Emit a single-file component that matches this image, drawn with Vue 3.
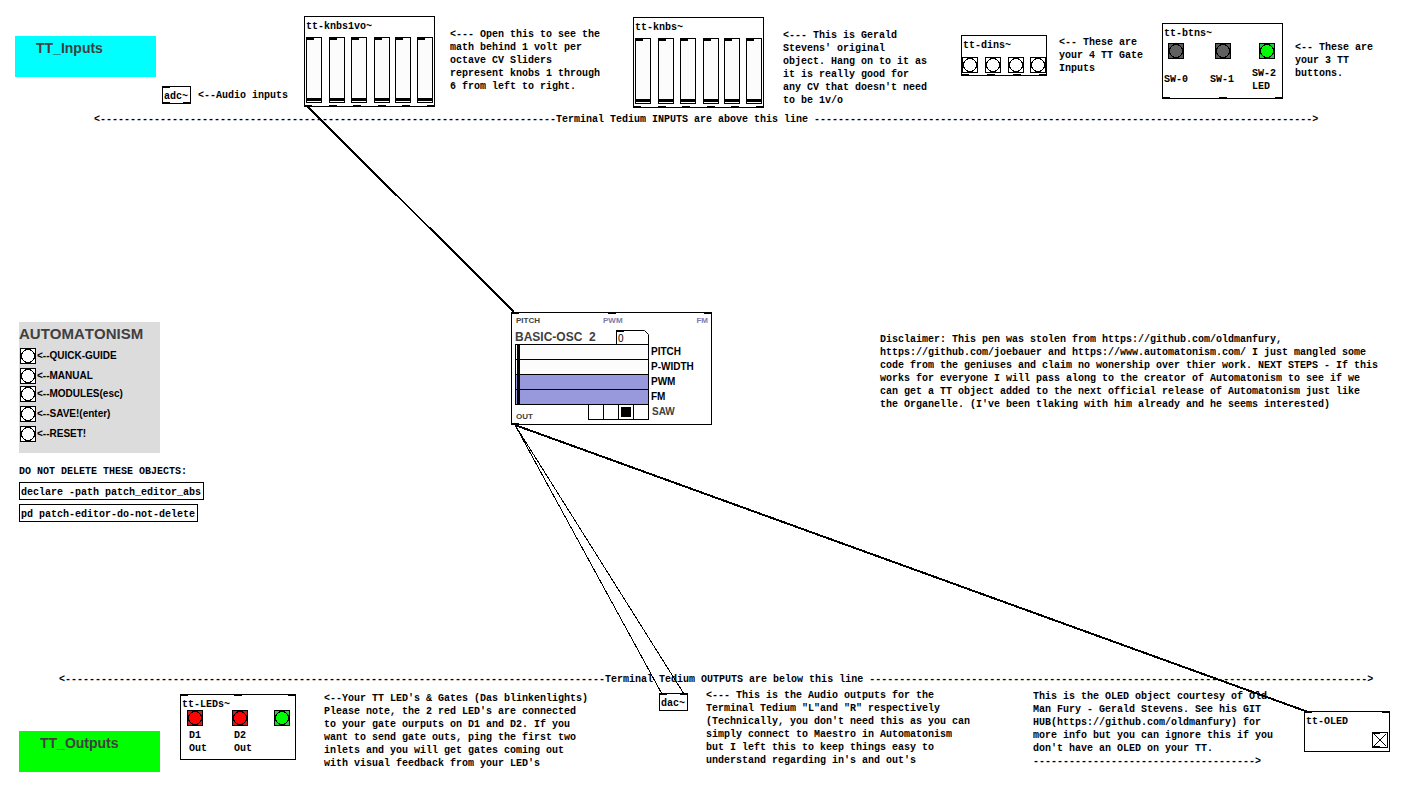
<script setup>
import { ref } from 'vue'

const at = (x, y) => ({ left: x + 'px', top: y + 'px' })
const dash = (n) => '-'.repeat(n)

const comments = [
  { x: 198, y: 89, lines: ['<--Audio inputs'] },
  {
    x: 450, y: 28,
    lines: ['<--- Open this to see the', 'math behind 1 volt per', 'octave CV Sliders', 'represent knobs 1 through', '6 from left to right.'],
  },
  {
    x: 783, y: 29,
    lines: ['<--- This is Gerald', "Stevens' original", 'object. Hang on to it as', 'it is really good for', "any CV that doesn't need", 'to be 1v/o'],
  },
  { x: 1059, y: 36, lines: ['<-- These are', 'your 4 TT Gate', 'Inputs'] },
  { x: 1295, y: 41, lines: ['<-- These are', 'your 3 TT', 'buttons.'] },
  { x: 94, y: 113, lines: ['<' + dash(76) + 'Terminal Tedium INPUTS are above this line ' + dash(83) + '>'] },
  {
    x: 880, y: 333,
    lines: [
      'Disclaimer: This pen was stolen from https://github.com/oldmanfury,',
      'https://github.com/joebauer and https://www.automatonism.com/ I just mangled some',
      'code from the geniuses and claim no wonership over thier work. NEXT STEPS - If this',
      'works for everyone I will pass along to the creator of Automatonism to see if we',
      'can get a TT object added to the next official release of Automatonism just like',
      "the Organelle. (I've been tlaking with him already and he seems interested)",
    ],
  },
  { x: 19, y: 465, lines: ['DO NOT DELETE THESE OBJECTS:'] },
  { x: 59, y: 673, lines: ['<' + dash(90) + 'Terminal Tedium OUTPUTS are below this line ' + dash(83) + '>'] },
  {
    x: 324, y: 692,
    lines: [
      "<--Your TT LED's & Gates (Das blinkenlights)",
      "Please note, the 2 red LED's are connected",
      'to your gate ourputs on D1 and D2. If you',
      'want to send gate outs, ping the first two',
      'inlets and you will get gates coming out',
      "with visual feedback from your LED's",
    ],
  },
  {
    x: 706, y: 689,
    lines: [
      '<--- This is the Audio outputs for the',
      'Terminal Tedium "L"and "R" respectively',
      "(Technically, you don't need this as you can",
      'simply connect to Maestro in Automatonism',
      'but I left this to keep things easy to',
      "understand regarding in's and out's",
    ],
  },
  {
    x: 1033, y: 690,
    lines: [
      'This is the OLED object courtesy of Old',
      'Man Fury - Gerald Stevens. See his GIT',
      'HUB(https://github.com/oldmanfury) for',
      'more info but you can ignore this if you',
      "don't have an OLED on your TT.",
      dash(37) + '>',
    ],
  },
]

const objects = [
  { x: 162, y: 86, text: 'adc~', ins: 1, outs: 2 },
  { x: 659, y: 693, text: 'dac~', ins: 2, outs: 0 },
  { x: 19, y: 482, text: 'declare -path patch_editor_abs', ins: 0, outs: 0 },
  { x: 19, y: 504, text: 'pd patch-editor-do-not-delete', ins: 0, outs: 0 },
]

const knobBanks = ref([
  { x: 304, y: 16, title: 'tt-knbs1vo~', knobs: [0, 0, 0, 0, 0, 0] },
  { x: 633, y: 17, title: 'tt-knbs~', knobs: [0, 0, 0, 0, 0, 0] },
])

const menu = ['<--QUICK-GUIDE', '<--MANUAL', '<--MODULES(esc)', '<--SAVE!(enter)', '<--RESET!']

const oscSliders = ref([
  { name: 'PITCH', value: 0, mod: false },
  { name: 'P-WIDTH', value: 0, mod: false },
  { name: 'PWM', value: 0, mod: true },
  { name: 'FM', value: 0, mod: true },
])
const wave = ref(2)
const semitone = ref('0')
const oled = ref(true)

const cords = [
  { from: [308, 107], to: [514, 312], signal: true },
  { from: [515, 425], to: [662, 694], signal: false },
  { from: [515, 425], to: [684, 694], signal: false },
  { from: [515, 425], to: [1308, 712], signal: true },
]
</script>

<template>
  <main class="patch">
    <header class="banner inputs" :style="at(15, 36)">TT_Inputs</header>
    <header class="banner outputs" :style="at(19, 731)">TT_Outputs</header>

    <p v-for="c in comments" :key="c.x + '-' + c.y" class="comment" :style="at(c.x, c.y)">{{ c.lines.join('\n') }}</p>

    <div v-for="o in objects" :key="o.text" class="node object" :style="at(o.x, o.y)">
      {{ o.text }}
      <span class="ports top"><i v-for="n in o.ins" :key="n"></i></span>
      <span class="ports bottom"><i v-for="n in o.outs" :key="n"></i></span>
    </div>

    <section v-for="b in knobBanks" :key="b.title" class="node bank" :style="at(b.x, b.y)">
      <h2 class="title">{{ b.title }}</h2>
      <div class="knobs">
        <input v-for="(k, i) in b.knobs" :key="i" v-model="b.knobs[i]" class="vslider" type="range" min="0" max="100" :aria-label="'Knob ' + (i + 1)" />
      </div>
      <span class="ports bottom"><i v-for="n in 6" :key="n"></i></span>
    </section>

    <section class="node dins" :style="at(961, 35)">
      <h2 class="title">tt-dins~</h2>
      <div class="gates">
        <button v-for="n in 4" :key="n" class="bang" type="button" :aria-label="'Gate ' + n">
          <svg viewBox="0 0 14 14"><circle cx="7" cy="7" r="6.5" /></svg>
        </button>
      </div>
      <span class="ports bottom"><i v-for="n in 4" :key="n"></i></span>
    </section>

    <section class="node btns" :style="at(1162, 23)">
      <h2 class="title">tt-btns~</h2>
      <div class="switches">
        <label class="cell">
          <button class="bang grey" type="button"><svg viewBox="0 0 14 14"><circle cx="7" cy="7" r="6.5" /></svg></button>
          <span>SW-0</span>
        </label>
        <label class="cell">
          <button class="bang grey" type="button"><svg viewBox="0 0 14 14"><circle cx="7" cy="7" r="6.5" /></svg></button>
          <span>SW-1</span>
        </label>
        <label class="cell tall">
          <button class="bang green" type="button"><svg viewBox="0 0 14 14"><circle cx="7" cy="7" r="6.5" /></svg></button>
          <span>SW-2<br />LED</span>
        </label>
      </div>
      <span class="ports bottom"><i v-for="n in 3" :key="n"></i></span>
    </section>

    <nav class="menu" :style="at(19, 322)">
      <h1>AUTOMATONISM</h1>
      <label v-for="m in menu" :key="m" class="entry">
        <button class="bang" type="button"><svg viewBox="0 0 14 14"><circle cx="7" cy="7" r="6.5" /></svg></button>
        <span>{{ m }}</span>
      </label>
    </nav>

    <section class="node osc" :style="at(511, 312)">
      <div class="inlets"><span>PITCH</span><span class="mod">PWM</span><span class="mod">FM</span></div>
      <div class="heading">
        <h2>BASIC-OSC&nbsp; 2</h2>
        <div class="numbox">
          <svg viewBox="0 0 33 15"><path d="M0.5 15V0.5H28.5L32.5 4.5V15" /><path class="port" d="M0 0H8V2H0Z" /></svg>
          <input v-model="semitone" type="text" aria-label="Semitone" />
        </div>
      </div>
      <div class="params">
        <label v-for="s in oscSliders" :key="s.name" class="param">
          <input v-model="s.value" type="range" min="0" max="100" class="hslider" :class="{ mod: s.mod }" />
          <span>{{ s.name }}</span>
        </label>
      </div>
      <div class="footer">
        <span class="out">OUT</span>
        <div class="radios">
          <input v-for="n in 4" :key="n" v-model="wave" type="radio" name="wave" :value="n - 1" :aria-label="'Waveform ' + n" />
        </div>
        <span class="shape">SAW</span>
      </div>
      <span class="ports top"><i v-for="n in 3" :key="n"></i></span>
      <span class="ports bottom"><i></i></span>
    </section>

    <section class="node leds" :style="at(180, 694)">
      <h2 class="title">tt-LEDs~</h2>
      <div class="lamps">
        <label class="cell">
          <button class="bang red" type="button"><svg viewBox="0 0 14 14"><circle cx="7" cy="7" r="6.5" /></svg></button>
          <span>D1<br />Out</span>
        </label>
        <label class="cell">
          <button class="bang red" type="button"><svg viewBox="0 0 14 14"><circle cx="7" cy="7" r="6.5" /></svg></button>
          <span>D2<br />Out</span>
        </label>
        <button class="bang green" type="button" aria-label="LED 3"><svg viewBox="0 0 14 14"><circle cx="7" cy="7" r="6.5" /></svg></button>
      </div>
      <span class="ports top"><i v-for="n in 3" :key="n"></i></span>
    </section>

    <section class="node oled" :style="at(1304, 711)">
      <h2 class="title">tt-OLED</h2>
      <label class="toggle">
        <input v-model="oled" type="checkbox" aria-label="OLED on" />
        <svg v-if="oled" viewBox="0 0 16 16"><path d="M2 2L14 14M14 2L2 14" /><path class="port" d="M0 0H8V2H0ZM0 14H8V16H0Z" /></svg>
      </label>
      <span class="ports top"><i v-for="n in 2" :key="n"></i></span>
    </section>

    <svg class="cords">
      <line v-for="(c, i) in cords" :key="i" :class="{ signal: c.signal }" :x1="c.from[0]" :y1="c.from[1]" :x2="c.to[0]" :y2="c.to[1]" />
    </svg>
  </main>
</template>

<style>
body {
  margin: 0;
  background: #fff;
}
</style>

<style scoped>
.patch {
  position: relative;
  min-height: 100vh;
  overflow: hidden;
  background: #fff;
  color: #000;
  font: bold 10px/13px "Liberation Mono", "Courier New", monospace;
}

.patch *,
.patch *::before {
  box-sizing: border-box;
}

h1,
h2,
p {
  margin: 0;
  font: inherit;
}

button,
input {
  display: block;
  margin: 0;
  padding: 0;
  border-radius: 0;
  font: inherit;
}

.comment,
.node,
.banner,
.menu {
  position: absolute;
}

.comment {
  white-space: pre;
}

.node {
  border: 1px solid #000;
  background: #fff;
}

.object {
  padding: 3px 2px 0 1px;
  white-space: nowrap;
}

.title {
  padding-left: 1px;
}

.ports {
  position: absolute;
  left: -1px;
  right: -1px;
  display: flex;
  justify-content: space-between;
}

.ports.top {
  top: -1px;
}

.ports.bottom {
  bottom: -1px;
}

.ports i {
  width: 8px;
  height: 2px;
  background: #000;
}

.banner {
  width: 141px;
  padding: 4px 0 21px 21px;
  color: #404040;
  font: bold 14px/16px "Liberation Sans", Arial, sans-serif;
}

.banner.inputs {
  background: #00ffff;
}

.banner.outputs {
  background: #00ff00;
}

.bang {
  flex: none;
  width: 16px;
  height: 16px;
  border: 1px solid #000;
  background: #fff;
}

.bang svg {
  display: block;
  width: 14px;
  height: 14px;
}

.bang circle {
  fill: #fcfcfc;
  stroke: #000;
  shape-rendering: crispEdges;
}

.bang.grey {
  background: #585858;
}

.bang.grey circle {
  fill: #606060;
}

.bang.green {
  background: #28c838;
}

.bang.green circle {
  fill: #00fc04;
}

.bang.red {
  background: #c81c1c;
}

.bang.red circle {
  fill: #fc0404;
}

.bank {
  padding: 3px 1px 3px;
}

.bank .title {
  padding-left: 0;
}

.knobs {
  display: grid;
  grid-template-columns: 23px 22px 23px 21px 22px 16px;
  margin-top: 4px;
}

.vslider {
  width: 16px;
  height: 66px;
  padding: 0 0 1px;
  border: 1px solid #000;
  background: linear-gradient(#000 0 0) 0 0 / 7px 2px no-repeat, #fcfcfc;
  appearance: none;
  writing-mode: vertical-lr;
  direction: rtl;
}

.vslider::-webkit-slider-thumb {
  width: 14px;
  height: 3px;
  border: 0;
  border-radius: 0;
  background: #000;
  appearance: none;
}

.dins {
  padding: 3px 0 2px;
}

.gates {
  display: grid;
  grid-template-columns: 23px 23px 22px 16px;
  margin-top: 5px;
}

.btns {
  padding: 3px 0 5px;
}

.switches {
  display: grid;
  grid-template-columns: 46px 42px 31px;
  margin-top: 3px;
}

.cell {
  display: block;
}

.switches .cell {
  padding-left: 1px;
}

.switches .bang {
  margin: 0 0 14px 4px;
}

.switches .cell:nth-child(2) .bang {
  margin-left: 5px;
}

.switches .tall .bang {
  margin: 0 0 8px 7px;
}

.menu {
  width: 141px;
  padding: 3px 1px 7px;
  background: #dcdcdc;
  font: bold 10px/16px "Liberation Sans", Arial, sans-serif;
}

.menu h1 {
  margin: 0 0 5px -1px;
  color: #404040;
  font-size: 15px;
  line-height: 18px;
  font-kerning: none;
}

.entry {
  display: flex;
  gap: 1px;
  margin-bottom: 4px;
}

.entry:nth-of-type(2) {
  margin-bottom: 2px;
}

.osc {
  width: 201px;
  padding: 3px 3px 4px;
  color: #404040;
  font: bold 8px/10px "Liberation Sans", Arial, sans-serif;
}

.inlets {
  display: grid;
  grid-template-columns: 87px 1fr auto;
  padding-left: 1px;
}

.mod {
  color: #7c7cac;
}

.heading {
  display: flex;
  align-items: flex-end;
  gap: 1px;
  margin-top: 4px;
}

.heading h2 {
  width: 100px;
  font-size: 12px;
  line-height: 15px;
}

.numbox {
  position: relative;
  width: 33px;
  height: 15px;
}

.numbox svg {
  position: absolute;
  inset: 0;
  width: 33px;
  height: 15px;
  fill: none;
  stroke: #000;
}

.numbox .port,
.toggle .port {
  fill: #000;
  stroke: none;
}

.numbox input {
  width: 28px;
  height: 12px;
  margin: 3px 0 0 2px;
  border: 0;
  background: none;
  color: #000;
  font-size: 10px;
  font-weight: normal;
  line-height: 12px;
}

.numbox {
  display: flow-root;
}

.params {
  display: grid;
  grid-auto-rows: 15px;
  margin-top: -1px;
  color: #000;
  font-size: 10px;
  line-height: 16px;
}

.param {
  display: flex;
  gap: 2px;
  white-space: nowrap;
}

.hslider {
  flex: none;
  width: 134px;
  height: 16px;
  padding-left: 1px;
  border: 1px solid #000;
  background: #fcfcfc;
  appearance: none;
}

.hslider.mod {
  background: #9898dc;
}

.hslider::-webkit-slider-thumb {
  width: 3px;
  height: 14px;
  border: 0;
  border-radius: 0;
  background: #000;
  appearance: none;
}

.footer {
  display: flex;
  align-items: flex-end;
}

.out {
  width: 73px;
  margin-bottom: -2px;
  padding-left: 1px;
}

.radios {
  display: flex;
  width: 61px;
  border-left: 1px solid #000;
}

.radios input {
  width: 15px;
  height: 16px;
  border: solid #000;
  border-width: 1px 1px 1px 0;
  background: #fff;
  appearance: none;
}

.radios input:checked {
  background: linear-gradient(#000 0 0) center / 10px 10px no-repeat, #fff;
}

.shape {
  padding-left: 3px;
  font-size: 10px;
  line-height: 16px;
}

.leds {
  width: 116px;
  padding: 3px 0 4px;
}

.lamps {
  display: grid;
  grid-template-columns: 45px 42px 16px;
  margin: -1px 0 0 6px;
}

.lamps .cell span {
  display: block;
  padding: 3px 0 0 2px;
}

.oled {
  width: 86px;
  padding: 3px 1px 3px 0;
}

.toggle {
  position: relative;
  display: block;
  width: 16px;
  height: 16px;
  margin: 4px 0 0 auto;
}

.toggle input {
  width: 16px;
  height: 16px;
  border: 1px solid #000;
  background: #fff;
  appearance: none;
}

.toggle svg {
  position: absolute;
  inset: 0;
  stroke: #000;
}

.cords {
  position: absolute;
  inset: 0;
  width: 100%;
  height: 100%;
  pointer-events: none;
}

.cords line {
  stroke: #000;
  stroke-width: 1px;
  shape-rendering: crispEdges;
}

.cords .signal {
  stroke-width: 2px;
}
</style>
